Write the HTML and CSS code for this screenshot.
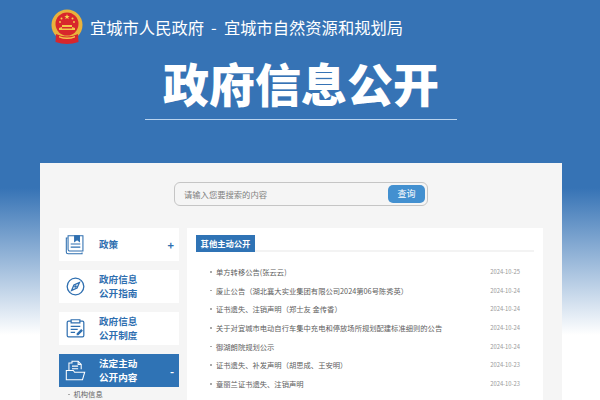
FILE: index.html
```html
<!DOCTYPE html>
<html lang="zh-CN">
<head>
<meta charset="utf-8">
<title>政府信息公开</title>
<link rel="stylesheet" href="styles.css">
</head>
<body>
<div class="page">
  <header class="top">
    <svg class="emblem" viewBox="0 0 32 36" width="32" height="36">
      <circle cx="16" cy="16" r="15.5" fill="#e9b23c"/>
      <circle cx="16" cy="15" r="11.5" fill="#d8262c"/>
      <path d="M14 5l.7 2h2l-1.6 1.2.6 2-1.7-1.2-1.7 1.2.6-2L11.300 7h2z" fill="#f6d44e" transform="translate(2 0)"/>
      <circle cx="10.500" cy="9.500" r="1" fill="#f6d44e"/><circle cx="21.500" cy="9.500" r="1" fill="#f6d44e"/>
      <circle cx="9" cy="13" r=".9" fill="#f6d44e"/><circle cx="23" cy="13" r=".9" fill="#f6d44e"/>
      <path d="M8 21v-2l3-1v-2h10v2l3 1v2z" fill="#f3c64a"/>
      <path d="M11 18h10v1.500H11z" fill="#d8262c"/>
      <path d="M5 25q11 5 22 0l.5 8q-11.500 4-23 0z" fill="#d8262c"/>
      <path d="M8 27q8 3 16 0v1.500q-8 3-16 0z" fill="#f3c64a"/>
    </svg>
    <div class="site">宜城市人民政府 - 宜城市自然资源和规划局</div>
  </header>
  <div class="hero">
    <h1 class="hero-title">政府信息公开</h1>
  </div>
  <main class="panel">
    <form class="search">
      <span class="search-hint">请输入您要搜索的内容</span>
      <span class="search-btn">查询</span>
    </form>
    <div class="cols">
      <nav class="side">
        <a class="nav-item">
          <svg class="nav-icon" viewBox="0 0 24 24" width="21" height="21" fill="none" stroke="#2f6fb0" stroke-width="1.200">
            <path d="M3 4.500H1.500V20.500a2 2 0 0 0 2 2H19.500V21"/>
            <path d="M3.500 2H20.500V19.500H5.500a2 2 0 0 1-2-2z"/>
            <path d="M11 2h5.500v6.500l-2.700-2-2.800 2z" fill="#2f6fb0"/>
            <path d="M6.500 11.500h11M6.500 15h11"/>
          </svg>
          <span class="nav-label">政策</span>
          <span class="nav-mark">+</span>
        </a>
        <a class="nav-item">
          <svg class="nav-icon" viewBox="0 0 24 24" width="21" height="21" fill="none" stroke="#2f6fb0" stroke-width="1.500">
            <circle cx="12" cy="12" r="9.500"/>
            <path d="M16.500 7.500L13.800 13.800 7.500 16.500 10.200 10.200z"/>
            <circle cx="12" cy="12" r=".8" fill="#2f6fb0"/>
          </svg>
          <span class="nav-label">政府信息<br>公开指南</span>
        </a>
        <a class="nav-item">
          <svg class="nav-icon" viewBox="0 0 24 24" width="21" height="21" fill="none" stroke="#2f6fb0" stroke-width="1.400">
            <path d="M7 3.500H4a1.500 1.500 0 0 0-1.500 1.500V20A1.500 1.500 0 0 0 4 21.500H20a1.500 1.500 0 0 0 1.500-1.500V5A1.500 1.500 0 0 0 20 3.500H17"/>
            <path d="M7 2h10v3.500H7z"/>
            <path d="M6.500 9.500h11M6.500 13h8M6.500 16.500h5"/>
            <path d="M14 18l4.500-4.500 1 1L15 19h-1z" fill="#2f6fb0"/>
          </svg>
          <span class="nav-label">政府信息<br>公开制度</span>
        </a>
        <a class="nav-item is-active">
          <svg class="nav-icon" viewBox="0 0 24 24" width="21" height="21" fill="none" stroke="#fff" stroke-width="1.200">
            <path d="M4.500 12.500V3.500H8V1.500H15L18.500 5V10.500"/>
            <path d="M15 1.500V5h3.500M8 7h7M8 10h7"/>
            <path d="M1.500 12h8l1.500 2h11.500l-2.500 8.500H1.500z"/>
          </svg>
          <span class="nav-label">法定主动<br>公开内容</span>
          <span class="nav-mark">-</span>
        </a>
        <div class="nav-sub">机构信息</div>
      </nav>
      <section class="content">
        <div class="tabbar"><span class="tab">其他主动公开</span></div>
        <ul class="list">
          <li class="row"><span class="row-title">单方转移公告(张云云)</span><span class="row-date">2024-10-25</span></li>
          <li class="row"><span class="row-title">废止公告（湖北襄大实业集团有限公司2024第06号陈秀英）</span><span class="row-date">2024-10-24</span></li>
          <li class="row"><span class="row-title">证书遗失、注销声明（郑士友 金传香）</span><span class="row-date">2024-10-24</span></li>
          <li class="row"><span class="row-title">关于对宜城市电动自行车集中充电和停放场所规划配建标准细则的公告</span><span class="row-date">2024-10-24</span></li>
          <li class="row"><span class="row-title">御湖朗院规划公示</span><span class="row-date">2024-10-24</span></li>
          <li class="row"><span class="row-title">证书遗失、补发声明（胡思成、王安明）</span><span class="row-date">2024-10-23</span></li>
          <li class="row"><span class="row-title">章丽兰证书遗失、注销声明</span><span class="row-date">2024-10-23</span></li>
        </ul>
      </section>
    </div>
  </main>
</div>
</body>
</html>
```
FILE: styles.css
```css
* { box-sizing: border-box; }
html, body { margin: 0; padding: 0; height: 400px; overflow: hidden; }
body {
  font-family: "Noto Sans CJK SC", "Liberation Sans", sans-serif;
  background: #fff;
}
.page {
  height: 400px;
  overflow: hidden;
  background: linear-gradient(#3673b5 0, #3673b5 188px, #fff 335px);
}
.top {
  display: flex;
  align-items: center;
  height: 46px;
  padding: 8px 0 0 51px;
}
.emblem { flex: none; }
.site {
  margin-left: 7px;
  font-size: 16.300px;
  line-height: 22px;
  color: #fff;
  white-space: nowrap;
  word-spacing: 3.500px;
}
.hero {
  width: 312px;
  height: 74px;
  margin-left: 145px;
  border-bottom: 1px solid #b9d3ee;
  text-align: center;
}
.hero-title {
  margin: 0;
  font-size: 46px;
  line-height: 73px;
  font-weight: 900;
  color: #fff;
  white-space: nowrap;
}
.panel {
  width: 522px;
  height: 300px;
  margin: 43px 0 0 40px;
  padding: 19px 19px 0;
  background: #f5f5f5;
}
.search {
  display: flex;
  align-items: center;
  justify-content: space-between;
  width: 254px;
  height: 24px;
  margin: 0 0 22px 115px;
  padding: 0 2px 0 9px;
  border: 1px solid #c5c5c5;
  border-radius: 6px;
}
.search-hint { font-size: 8.300px; color: #808080; }
.search-btn {
  width: 37px;
  height: 18px;
  border-radius: 5px;
  background: #4390d0;
  color: #fff;
  font-size: 9px;
  line-height: 18px;
  text-align: center;
}
.cols { display: flex; gap: 8px; }
.side { width: 120px; flex: none; display: flex; flex-direction: column; gap: 9px; }
.nav-item {
  display: flex;
  align-items: center;
  height: 33px;
  padding: 0 5px 0 6px;
  background: #fff;
  color: #2f6fb0;
  font-size: 9.600px;
  line-height: 14px;
  font-weight: 700;
}
.nav-icon { flex: none; }
.nav-label { flex: 1; margin-left: 13px; padding-bottom: 2px; }
.nav-mark { font-size: 11px; font-weight: 700; }
.is-active { background: #2f73b5; color: #fff; }
.nav-sub {
  margin-top: -9px;
  padding-left: 15px;
  font-size: 7.300px;
  line-height: 14px;
  color: #666;
}
.nav-sub::before {
  content: "";
  display: inline-block;
  width: 1.500px;
  height: 1.500px;
  margin: 0 4px 2px -6px;
  background: #aaa;
}
.content {
  width: 356px;
  height: 200px;
  padding: 7px 9px 0;
  background: #fff;
}
.tabbar { height: 17px; border-bottom: 2px solid #f3f3f3; }
.tab {
  display: block;
  width: 59px;
  height: 17px;
  background: #2f73b5;
  color: #fff;
  font-size: 8.300px;
  font-weight: 700;
  line-height: 17px;
  text-align: center;
}
.list { margin: 11px 0 0; padding: 0; list-style: none; }
.row {
  display: flex;
  justify-content: space-between;
  height: 18.700px;
  padding: 0 14px 0 20px;
  line-height: 18.700px;
  position: relative;
  white-space: nowrap;
}
.row::before {
  content: "";
  position: absolute;
  left: 14px;
  top: 8px;
  width: 1.500px;
  height: 1.500px;
  background: #aaa;
}
.row-title { font-size: 7.300px; color: #606060; }
.row-date { font-size: 5.800px; color: #999; }
```
